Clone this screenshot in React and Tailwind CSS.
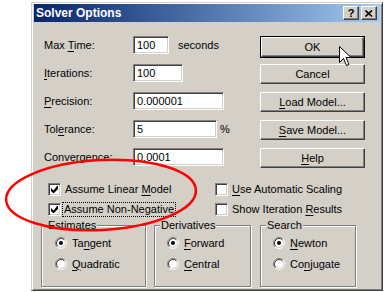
import React from 'react';

// Windows classic 3D look helpers
const raised =
  'border border-t-white border-l-white border-b-[#404040] border-r-[#404040] shadow-[inset_-1px_-1px_0_#808080]';
const sunken =
  'border border-t-[#808080] border-l-[#808080] border-b-white border-r-white shadow-[inset_1px_1px_0_#404040,inset_-1px_-1px_0_#d4d0c8]';

function U({ children }) {
  return <span className="underline underline-offset-[2px] decoration-1">{children}</span>;
}

function Field({ value, w }) {
  return (
    <div className={`h-[18px] ${w} bg-white ${sunken} pl-[3px] flex items-center leading-none`}>
      {value}
    </div>
  );
}

function Btn({ children }) {
  return (
    <div className={`h-[20px] w-[105px] flex items-center justify-center bg-[#d4d0c8] ${raised}`}>
      {children}
    </div>
  );
}

function Check({ checked }) {
  return (
    <div className={`relative w-[13px] h-[13px] shrink-0 bg-white ${sunken}`}>
      {checked && (
        <svg className="absolute left-[2px] top-[2px]" width="7" height="7" viewBox="0 0 7 7">
          <path d="M6 0h1v3L3 7H2L0 5V2l2.5 2.5z" fill="#000" />
        </svg>
      )}
    </div>
  );
}

function Radio({ on }) {
  return (
    <svg width="12" height="12" viewBox="0 0 12 12" className="shrink-0">
      <circle cx="6" cy="6" r="4.5" fill="#fff" />
      <path d="M2.11 9.89A5.5 5.5 0 0 1 9.89 2.11" stroke="#808080" fill="none" />
      <path d="M9.89 2.11A5.5 5.5 0 0 1 2.11 9.89" stroke="#fff" fill="none" />
      <path d="M2.82 9.18A4.5 4.5 0 0 1 9.18 2.82" stroke="#404040" fill="none" />
      <path d="M9.18 2.82A4.5 4.5 0 0 1 2.82 9.18" stroke="#d4d0c8" fill="none" />
      {on && <circle cx="6" cy="6" r="2" fill="#000" />}
    </svg>
  );
}

function Group({ title, w, pl, items }) {
  return (
    <div
      className={`relative h-[62px] ${w} border border-[#808080] shadow-[1px_1px_0_#fff,inset_1px_1px_0_#fff]`}
    >
      <span className="absolute left-[5px] top-[-8px] bg-[#d4d0c8] px-[1px] leading-[14px]">{title}</span>
      <div className={`flex flex-col gap-[9px] pt-[11px] ${pl}`}>
        {items.map((it, i) => (
          <div key={i} className="flex items-center gap-[5px] h-[12px]">
            <Radio on={it.on} />
            <span className="leading-none">{it.label}</span>
          </div>
        ))}
      </div>
    </div>
  );
}

export default function App() {
  return (
    <div className="relative w-[384px] h-[292px] bg-white overflow-hidden font-['Liberation_Sans',Arial,sans-serif] text-[11px] text-black">
      <div className="ml-[31px] mt-[2px] w-[352px] h-[289px] bg-[#d4d0c8] border border-t-[#d4d0c8] border-l-[#d4d0c8] border-b-[#404040] border-r-[#404040] shadow-[inset_1px_1px_0_#fff,inset_-1px_-1px_0_#808080] px-[2px] pt-[1px]">
        {/* title bar */}
        <div className="h-[18px] flex items-center justify-between bg-gradient-to-r from-[#0a246a] to-[#a6caf0] pl-[2px] pr-[3px]">
          <span className="text-white font-bold text-[12px] leading-none">Solver Options</span>
          <div className="flex gap-[2px]">
            <div className={`w-[16px] h-[14px] bg-[#d4d0c8] ${raised} flex items-center justify-center font-bold text-[11px] leading-none`}>
              ?
            </div>
            <div className={`w-[16px] h-[14px] bg-[#d4d0c8] ${raised} flex items-center justify-center`}>
              <svg width="8" height="7" viewBox="0 0 8 7">
                <path d="M0.5 0.5L7 6.5M7 0.5L0.5 6.5" stroke="#000" strokeWidth="1.6" />
              </svg>
            </div>
          </div>
        </div>

        {/* fields + buttons */}
        <div className="flex pt-[14px]">
          <div className="w-[226px] pl-[10px] flex flex-col gap-[10px]">
            <div className="flex items-center">
              <span className="w-[89px]">Max <U>T</U>ime:</span>
              <Field value="100" w="w-[36px]" />
              <span className="ml-[9px]">seconds</span>
            </div>
            <div className="flex items-center">
              <span className="w-[89px]"><U>I</U>terations:</span>
              <Field value="100" w="w-[50px]" />
            </div>
            <div className="flex items-center">
              <span className="w-[89px]"><U>P</U>recision:</span>
              <Field value="0.000001" w="w-[91px]" />
            </div>
            <div className="flex items-center">
              <span className="w-[89px]">Tol<U>e</U>rance:</span>
              <Field value="5" w="w-[84px]" />
              <span className="ml-[3px]">%</span>
            </div>
            <div className="flex items-center">
              <span className="w-[89px]">Con<U>v</U>ergence:</span>
              <Field value="0.0001" w="w-[91px]" />
            </div>
          </div>
          <div className="flex flex-col">
            <div className="h-[22px] w-[105px] border border-black">
              <div className={`h-full w-full flex items-center justify-center bg-[#d4d0c8] ${raised}`}>OK</div>
            </div>
            <div className="mt-[6px] flex flex-col gap-[8px]">
              <Btn>Cancel</Btn>
              <Btn><U>L</U>oad Model...</Btn>
              <Btn><U>S</U>ave Model...</Btn>
              <Btn><U>H</U>elp</Btn>
            </div>
          </div>
        </div>

        {/* checkboxes */}
        <div className="flex mt-[15px]">
          <div className="w-[181px] pl-[14px] flex flex-col gap-[7px]">
            <div className="flex items-center gap-[3px] h-[13px]">
              <Check checked />
              <span className="px-[1px] leading-none">Assume Linear <U>M</U>odel</span>
            </div>
            <div className="flex items-center gap-[1px] h-[13px]">
              <Check checked />
              <span className="border border-dotted border-black px-[1px] py-[1px] leading-none">Assume Non-Negative</span>
            </div>
          </div>
          <div className="flex flex-col gap-[7px]">
            <div className="flex items-center gap-[4px] h-[13px]">
              <Check />
              <span className="leading-none"><U>U</U>se Automatic Scaling</span>
            </div>
            <div className="flex items-center gap-[4px] h-[13px]">
              <Check />
              <span className="leading-none">Show Iteration <U>R</U>esults</span>
            </div>
          </div>
        </div>

        {/* option groups */}
        <div className="flex mt-[9px] pl-[7px]">
          <Group
            title="Estimates"
            w="w-[105px]"
            pl="pl-[13px]"
            items={[
              { on: true, label: <>Ta<U>n</U>gent</> },
              { on: false, label: <><U>Q</U>uadratic</> },
            ]}
          />
          <div className="ml-[8px]">
            <Group
              title="Derivatives"
              w="w-[97px]"
              pl="pl-[12px]"
              items={[
                { on: true, label: <><U>F</U>orward</> },
                { on: false, label: <><U>C</U>entral</> },
              ]}
            />
          </div>
          <div className="ml-[9px]">
            <Group
              title="Search"
              w="w-[96px]"
              pl="pl-[12px]"
              items={[
                { on: true, label: <><U>N</U>ewton</> },
                { on: false, label: <>Co<U>n</U>jugate</> },
              ]}
            />
          </div>
        </div>
      </div>

      {/* red annotation ellipse */}
      <svg className="absolute left-0 top-0 pointer-events-none" width="384" height="292" viewBox="0 0 384 292">
        <ellipse cx="101" cy="195" rx="95" ry="35" transform="rotate(-3 101 195)" fill="none" stroke="#ff0000" strokeWidth="2.5" />
      </svg>

      {/* mouse cursor */}
      <svg className="absolute left-[339px] top-[46px] pointer-events-none" width="13" height="21" viewBox="0 0 13 21">
        <path d="M0.5 0.5V16.5L4.5 12.5L7.5 19.5L10 18.5L7 11.5H12Z" fill="#fff" stroke="#000" strokeWidth="1" strokeLinejoin="miter" />
      </svg>
    </div>
  );
}
